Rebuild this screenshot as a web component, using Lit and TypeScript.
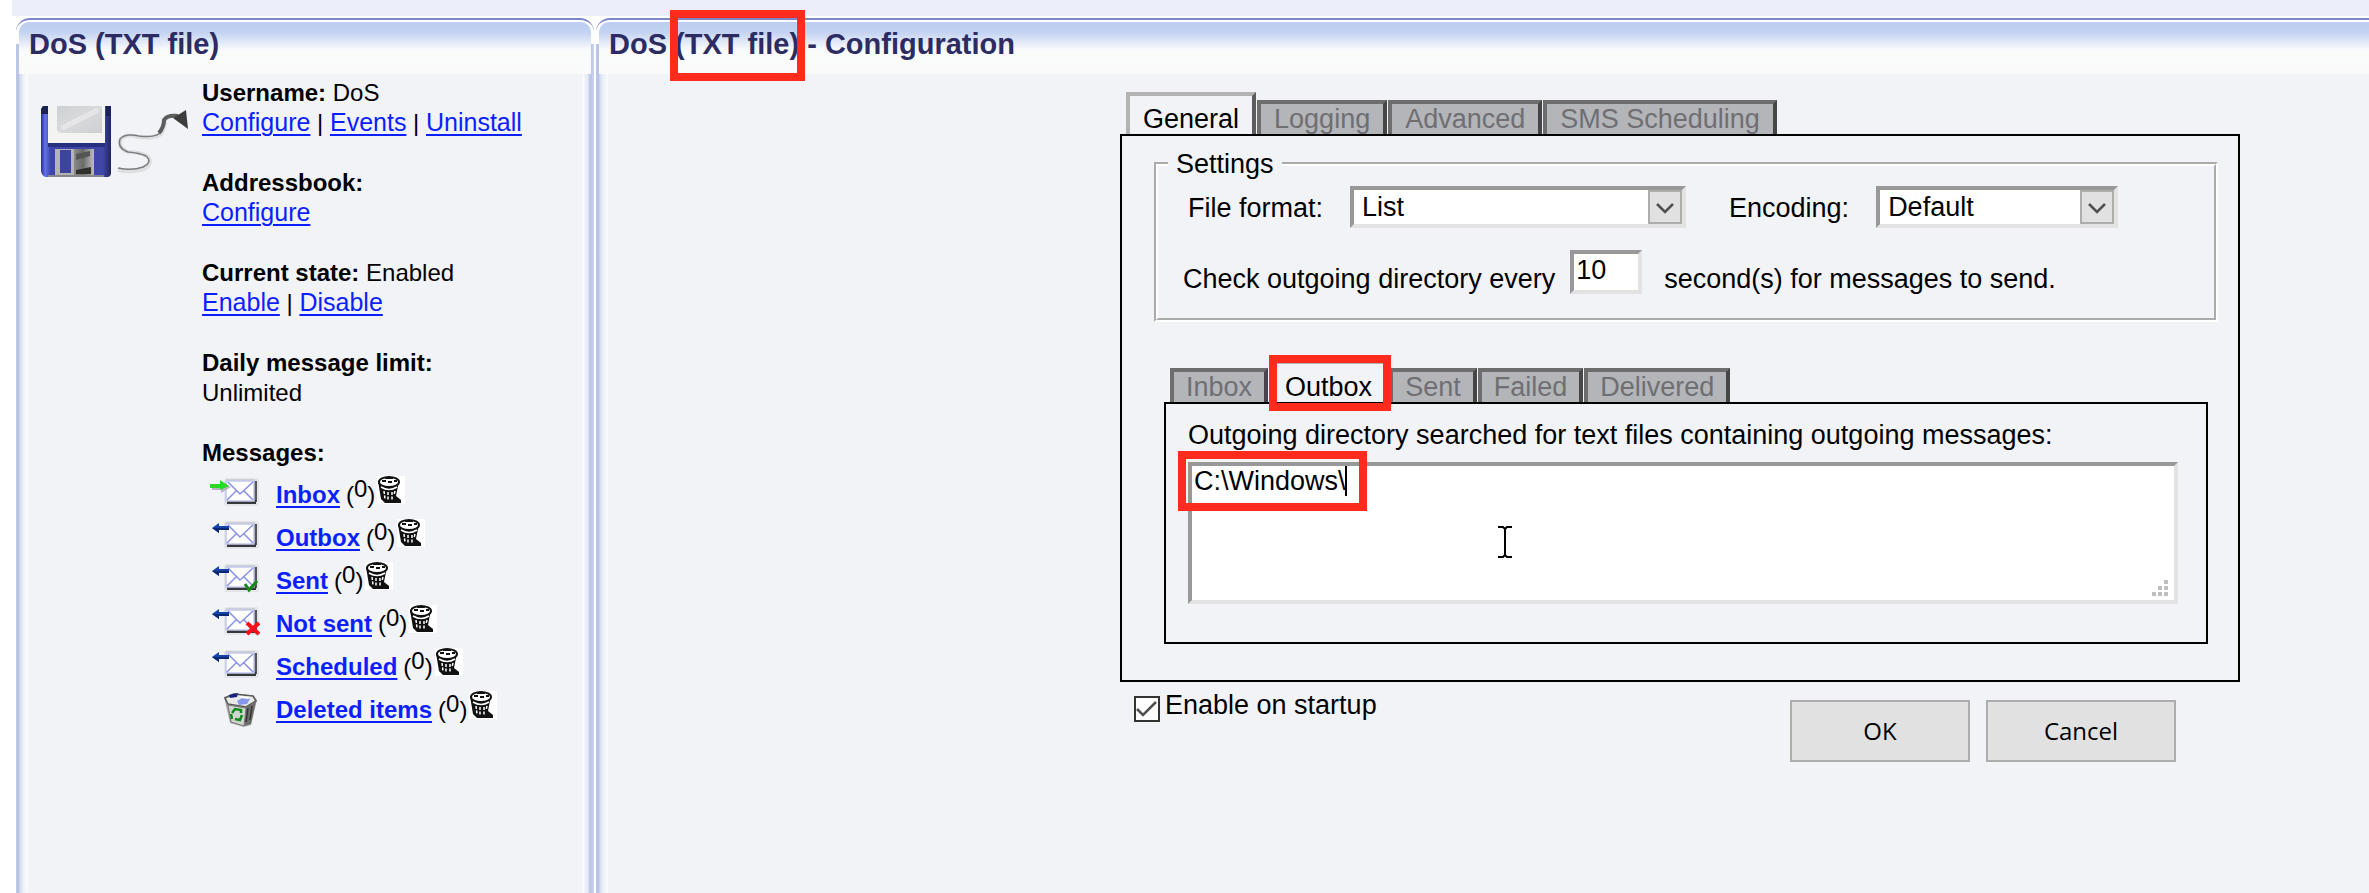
import { LitElement, html, css, svg, nothing } from "lit";
import { customElement, property, state } from "lit/decorators.js";
import { classMap } from "lit/directives/class-map.js";

type Mail = "in" | "out" | "sent" | "failed" | "bin";

@customElement("tab-bar")
class TabBar extends LitElement {
  @property({ type: Array }) tabs: string[] = [];
  @property() active = "";
  @property() marked = "";
  @property({ type: Boolean, reflect: true }) compact = false;

  static styles = css`
    :host {
      display: flex;
      align-items: flex-end;
      gap: 1px;
      padding-left: 6px;
    }
    .tab {
      position: relative;
      box-sizing: border-box;
      height: 34px;
      margin: 0;
      padding: 0 13px;
      border: 4px solid #6c6d6c;
      border-right-color: #454645;
      border-bottom: 0;
      background: #b3b5b9;
      color: #6f6f73;
      font: 27px/30px "Liberation Sans", Arial, sans-serif;
      white-space: nowrap;
    }
    :host([compact]) .tab {
      padding: 0 12px;
    }
    .tab.active,
    :host([compact]) .tab.active {
      height: 42px;
      padding-top: 8px;
      border-color: #b2b3b2;
      border-right-color: #5c5d5c;
      background: #f1f3f7;
      color: #000;
    }
    .mark {
      position: absolute;
      inset: -9px -7px -9px -4px;
      border: 8px solid #ff2c1e;
      pointer-events: none;
      z-index: 2;
    }
  `;

  private pick(tab: string) {
    this.dispatchEvent(new CustomEvent("pick", { detail: tab }));
  }

  render() {
    return this.tabs.map(
      (t) => html`<button
        type="button"
        class=${classMap({ tab: true, active: t === this.active })}
        @click=${() => this.pick(t)}
      >${t}${t === this.marked ? html`<span class="mark"></span>` : nothing}</button>`
    );
  }
}

const arrowIn = svg`<path d="M2 7H11V4L21 9L11 15V12H2Z" fill="#b9b0c6"/><path d="M0 6H10V2L19 8L10 12V10H0Z" fill="#27dc20"/>`;
const arrowOut = svg`<path d="M2 7L9 2V5H19V9H9V12Z" fill="#1643a8"/><path d="M2 7H19V9H9V12Z" fill="#0a2878"/>`;

function mailIcon(kind: Mail) {
  if (kind === "bin") {
    return html`<svg class="mail" viewBox="0 0 50 34" aria-hidden="true">
      <path d="M14 4L24 0L44 3L47 7L41 32L34 34L20 30Z" fill="#a9aaa8" />
      <path d="M15 5L24 1L43 3L46 8L36 14L18 11Z" fill="#e9e9e7" stroke="#5a5a5a" stroke-width="1.500" />
      <path d="M36 14L46 8L41 31L34 33Z" fill="#6d6e6c" />
      <path d="M18 12L36 15L34 33L21 29Z" fill="#d3d4d1" stroke="#777" />
      <path d="M19 2L28 0L27 4L20 5Z" fill="#1a1f83" />
      <path d="M27 8L34 4L40 6L37 11L29 12Z" fill="#8796ee" />
      <path d="M30 3L40 4L38 6L31 5Z" fill="#fff" />
      <path d="M22 20L25 16L31 17V20M32 22L30 27L25 26M22 26L21 21" fill="none" stroke="#118a1d" stroke-width="2.500" />
      <path d="M38 15L36 29M42 13L40 27" stroke="#333" stroke-width="1.500" />
    </svg>`;
  }
  return html`<svg class="mail" viewBox="0 0 50 34" aria-hidden="true">
    <rect x="14" y="0" width="35" height="28" rx="3" fill="#e4e5ea" />
    <rect x="16" y="1" width="29" height="3" fill="#cfd0d6" />
    <rect x="43" y="3" width="4" height="21" fill="#55575b" />
    <rect x="17" y="22" width="29" height="4" fill="#35373b" />
    <rect x="16" y="3" width="28" height="20" fill="#fff" stroke="#c3c7ea" stroke-width="1.500" />
    <path d="M18 4L30 16L43 4M17 22L26 13M43 22L34 13" fill="none" stroke="#8791e6" stroke-width="1.500" />
    ${kind === "in" ? arrowIn : arrowOut}
    ${kind === "sent" ? svg`<path d="M35 20L39 26L47 17" fill="none" stroke="#138a13" stroke-width="3"/>` : nothing}
    ${kind === "failed" ? svg`<path d="M37 16L49 27M49 16L37 27" fill="none" stroke="#f5101c" stroke-width="4"/>` : nothing}
  </svg>`;
}

const trash = html`<svg class="trash" viewBox="0 0 28 28" aria-hidden="true">
  <rect width="28" height="28" fill="#fff" />
  <path d="M1 5L4 23L8 27H24V24L19 20L22 5Z" fill="#111" />
  <ellipse cx="12" cy="6" rx="10" ry="5" fill="#fff" stroke="#111" stroke-width="2" />
  <path d="M5 5H9M11 6H15M17 5H20M8 2H16" stroke="#111" stroke-width="2" />
  <path d="M4 11Q12 16 20 11" fill="none" stroke="#fff" stroke-width="1.500" />
  <path d="M7 15L8 23M11 16V25M15 16V24M18 15L17 19" stroke="#fff" stroke-width="1.500" stroke-dasharray="3 1.500" />
</svg>`;

const floppy = html`<svg class="floppy" viewBox="0 0 150 80" aria-hidden="true">
  <defs>
    <linearGradient id="blue" x1="0" x2="1">
      <stop offset="0" stop-color="#2a2f8f" />
      <stop offset="0.060" stop-color="#6470ea" />
      <stop offset="0.140" stop-color="#3c43ab" />
      <stop offset="0.880" stop-color="#4047a8" />
      <stop offset="1" stop-color="#20265f" />
    </linearGradient>
    <linearGradient id="label" x1="0" y1="0" x2="1" y2="1">
      <stop offset="0" stop-color="#cfd0d2" />
      <stop offset="0.500" stop-color="#d9dadc" />
      <stop offset="1" stop-color="#cdced0" />
    </linearGradient>
    <linearGradient id="metal" x1="0" x2="1">
      <stop offset="0" stop-color="#8b8b88" />
      <stop offset="0.500" stop-color="#6a6b69" />
      <stop offset="1" stop-color="#b0b0ad" />
    </linearGradient>
  </defs>
  <path d="M3 6H71V73Q71 76 68 77H5Q1 75 1 70V10Z" fill="url(#blue)" />
  <path d="M1 9L3 6H8V14H1ZM66 6H71V16H66Z" fill="#1b2150" />
  <path d="M8 6H65V43H8Z" fill="#f3f3f2" />
  <path d="M17 6H62V33H22Q17 33 17 29Z" fill="url(#label)" />
  <path d="M22 28L58 10" stroke="#e6e6e8" stroke-width="5" />
  <path d="M8 43H65V47H8Z" fill="#27307f" />
  <path d="M15 49H54V76H15Z" fill="#b4b5b3" />
  <path d="M20 50H31V73H20Z" fill="#3d449f" />
  <path d="M34 49H52V76H34Z" fill="url(#metal)" />
  <path d="M36 70L51 67V74H36Z" fill="#2f302e" />
  <path d="M36 54L50 51V56L36 60Z" fill="#555654" />
  <path d="M8 76H64" stroke="#85868a" stroke-width="2" />
  <path d="M78 70Q92 73 104 69Q114 63 107 56Q100 52 88 52Q77 48 81 39Q86 33 99 37Q114 39 121 34Q125 28 125 20Q128 14 138 16" fill="none" stroke="#dedfe1" stroke-width="4" />
  <path d="M78 68Q92 71 103 67Q113 62 106 56Q100 53 88 52Q77 48 80 39Q85 33 99 36Q114 38 120 33Q124 28 124 20Q127 14 138 15" fill="none" stroke="#7b7c7d" stroke-width="1.500" />
  <path d="M119 33Q124 27 124 20Q127 15 138 16" fill="none" stroke="#5c5d5d" stroke-width="4" />
  <path d="M146 10L148 29L133 18Z" fill="#3c3d3c" />
</svg>`;

@customElement("app-root")
class AppRoot extends LitElement {
  @state() private mainTab = "General";
  @state() private boxTab = "Outbox";

  static styles = css`
    :host {
      display: block;
      background: #fff;
      color: #000;
      font: 24px/30px "Liberation Sans", Arial, sans-serif;
    }
    * {
      box-sizing: border-box;
    }
    .page {
      display: flex;
      flex-direction: column;
      min-height: 100vh;
      overflow: hidden;
    }
    .strip {
      height: 16px;
      margin-left: 12px;
      background: #eceefa;
    }
    .columns {
      display: grid;
      grid-template-columns: 578px 1fr;
      gap: 2px;
      flex: 1;
      padding: 2px 0 0 16px;
    }
    .panel {
      display: flex;
      flex-direction: column;
      border-top: 2px solid #7d88c8;
      border-radius: 14px 14px 0 0;
      padding: 2px 12px 0;
      background:
        linear-gradient(90deg, #bcc7e6, #b9c5e3 3px, #dae1f1 4px, #dfe5f3 6px, #eef1f9 7px, #f0f3f9 9px, #f8f9fb 10px) 0 24px / 12px 100% no-repeat,
        linear-gradient(270deg, #cdd6ec, #b9c5e3 3px, #c5cfe8 5px, #e6ebf6 6px, #eef1f9 9px, #f8f9fb 10px) 100% 24px / 12px 100% no-repeat,
        #fff;
    }
    .wide {
      border-top-right-radius: 0;
      padding-right: 0;
      background:
        linear-gradient(90deg, #bcc7e6, #b9c5e3 3px, #dae1f1 4px, #dfe5f3 6px, #eef1f9 7px, #f0f3f9 9px, #f8f9fb 10px) 0 24px / 12px 100% no-repeat,
        #fff;
    }
    .head {
      height: 52px;
      margin: 0 -9px;
      padding: 0 10px;
      border-radius: 10px 10px 0 0;
      background: linear-gradient(#bccdf1, #c3d2f2 10px, #dfe7f7 19px, #f7f9fb 27px, #fafbfb 30px, #fafafa);
      color: #2d2c62;
      font-size: 29px;
      font-weight: bold;
      line-height: 44px;
      white-space: nowrap;
    }
    .wide .head {
      margin-right: 0;
      border-top-right-radius: 0;
    }
    .body {
      flex: 1;
      background: #f1f3f7;
    }
    .marked {
      position: relative;
    }
    .mark {
      position: absolute;
      border: 8px solid #ff2c1e;
      pointer-events: none;
      z-index: 2;
    }
    .title-mark {
      inset: -18px -6px -21px -5px;
    }
    .path-mark {
      top: -11px;
      left: -10px;
      width: 189px;
      height: 60px;
    }
    a {
      color: #0b1fff;
      text-underline-offset: 3px;
      text-decoration-thickness: 2px;
    }
    .account {
      display: flex;
      gap: 12px;
      padding: 4px 0 0 12px;
    }
    .floppy {
      flex: none;
      width: 150px;
      height: 80px;
      margin-top: 22px;
    }
    .info p {
      margin: 0 0 30px;
    }
    .info p a {
      font-size: 25px;
      line-height: 24px;
    }
    .info h2 {
      margin: 0;
      font-size: 24px;
      line-height: 30px;
    }
    .folders {
      margin: 5px 0 0;
      padding: 0 0 0 8px;
      list-style: none;
    }
    .folders li {
      display: flex;
      height: 43px;
      line-height: 43px;
    }
    .folders a {
      margin: 0 6px 0 16px;
      font-weight: bold;
    }
    .mail {
      width: 50px;
      height: 34px;
      margin-top: 5px;
    }
    .trash {
      width: 28px;
      height: 28px;
      margin: 3px 0 0 2px;
    }
    .raised {
      position: relative;
      top: -6px;
    }
    .form {
      max-width: 1120px;
      margin: 18px 16px 0 512px;
      font-size: 27px;
    }
    .sheet {
      padding: 13px 20px 36px 32px;
      border: 2px solid #000;
    }
    fieldset {
      margin: 0;
      padding: 7px 0 24px;
      border: 4px groove #fff;
    }
    legend {
      margin-left: 10px;
      padding: 0 8px;
      line-height: 30px;
    }
    .row {
      display: flex;
      align-items: center;
      gap: 27px;
      padding-left: 30px;
      white-space: nowrap;
    }
    .row label {
      padding-top: 2px;
    }
    .timing {
      align-items: flex-end;
      gap: 15px;
      margin-top: 22px;
      padding-left: 25px;
    }
    .after {
      padding-left: 7px;
    }
    .pick {
      position: relative;
      width: 336px;
    }
    .short {
      width: 242px;
    }
    .second {
      margin-left: 16px;
    }
    select,
    .secs,
    textarea {
      display: block;
      margin: 0;
      border: 4px solid #979897;
      border-right-color: #e3e3e3;
      border-bottom-color: #e3e3e3;
      border-radius: 0;
      outline: none;
      background: #fff;
      color: #000;
      font: 27px/30px "Liberation Sans", Arial, sans-serif;
    }
    select {
      appearance: none;
      width: 100%;
      height: 42px;
      padding: 0 40px 0 8px;
    }
    .drop {
      position: absolute;
      top: 4px;
      right: 4px;
      width: 34px;
      height: 34px;
      border: 2px solid #adadad;
      background: #e1e1e1;
      pointer-events: none;
    }
    .secs {
      width: 72px;
      height: 44px;
      padding: 0 0 4px 2px;
    }
    .boxes {
      margin: 38px 10px 0;
    }
    .inner {
      padding: 16px 28px 38px 22px;
      border: 2px solid #000;
    }
    .inner label {
      display: block;
      margin-bottom: 12px;
    }
    textarea {
      width: 100%;
      height: 142px;
      padding: 0 2px;
      resize: none;
    }
    .caret {
      position: absolute;
      top: 4px;
      left: 157px;
      width: 2px;
      height: 30px;
      background: #000;
    }
    .beam {
      position: absolute;
      top: 64px;
      left: 310px;
      width: 14px;
      height: 32px;
    }
    .grip {
      position: absolute;
      right: 10px;
      bottom: 8px;
      width: 16px;
      height: 16px;
    }
    .foot {
      display: flex;
      justify-content: space-between;
      align-items: flex-start;
      padding: 8px 64px 0 14px;
    }
    .startup {
      display: flex;
      gap: 5px;
    }
    .tick {
      position: relative;
      width: 26px;
      height: 26px;
      margin-top: 6px;
    }
    .tick input {
      appearance: none;
      display: block;
      width: 26px;
      height: 26px;
      margin: 0;
      border: 2px solid #333;
      background: #fff;
    }
    .tick svg {
      position: absolute;
      inset: 0;
      pointer-events: none;
    }
    .tick input:not(:checked) + svg {
      display: none;
    }
    .actions {
      display: flex;
      gap: 16px;
      padding-top: 10px;
    }
    .actions button {
      width: 180px;
      height: 62px;
      padding: 0;
      border: 2px solid #adadad;
      background: #e1e1e1;
      color: #000;
      font: 24px/30px "Open Sans", "Noto Sans", sans-serif;
    }
    .actions .cancel {
      width: 190px;
    }
  `;

  private folders: [Mail, string][] = [
    ["in", "Inbox"],
    ["out", "Outbox"],
    ["sent", "Sent"],
    ["failed", "Not sent"],
    ["out", "Scheduled"],
    ["bin", "Deleted items"],
  ];

  private drop() {
    return html`<svg class="drop" viewBox="0 0 30 30" aria-hidden="true">
      <path d="M7 12L15 20L23 12" fill="none" stroke="#505050" stroke-width="2.500" />
    </svg>`;
  }

  render() {
    return html`<div class="page">
      <div class="strip"></div>
      <div class="columns">
        <aside class="panel">
          <div class="head">DoS (TXT file)</div>
          <div class="body account">
            ${floppy}
            <div class="info">
              <p><b>Username:</b> DoS<br /><a href="#">Configure</a> | <a href="#">Events</a> | <a href="#">Uninstall</a></p>
              <p><b>Addressbook:</b><br /><a href="#">Configure</a></p>
              <p><b>Current state:</b> Enabled<br /><a href="#">Enable</a> | <a href="#">Disable</a></p>
              <p><b>Daily message limit:</b><br />Unlimited</p>
              <h2>Messages:</h2>
              <ul class="folders">
                ${this.folders.map(
                  ([kind, name]) => html`<li>${mailIcon(kind)}<a href="#">${name}</a><span>(<span class="raised">0</span>)</span>${trash}</li>`
                )}
              </ul>
            </div>
          </div>
        </aside>
        <main class="panel wide">
          <div class="head">DoS <span class="marked">(TXT file)<span class="mark title-mark"></span></span> - Configuration</div>
          <div class="body">
            <form class="form" @submit=${(e: Event) => e.preventDefault()}>
              <tab-bar
                .tabs=${["General", "Logging", "Advanced", "SMS Scheduling"]}
                .active=${this.mainTab}
                @pick=${(e: CustomEvent) => (this.mainTab = e.detail)}
              ></tab-bar>
              <div class="sheet">
                <fieldset>
                  <legend>Settings</legend>
                  <div class="row">
                    <label for="format">File format:</label>
                    <div class="pick">
                      <select id="format"><option>List</option></select>${this.drop()}
                    </div>
                    <label class="second" for="encoding">Encoding:</label>
                    <div class="pick short">
                      <select id="encoding"><option>Default</option></select>${this.drop()}
                    </div>
                  </div>
                  <div class="row timing">
                    <label for="secs">Check outgoing directory every</label>
                    <input class="secs" id="secs" type="text" value="10" />
                    <span class="after">second(s) for messages to send.</span>
                  </div>
                </fieldset>
                <div class="boxes">
                  <tab-bar
                    compact
                    .tabs=${["Inbox", "Outbox", "Sent", "Failed", "Delivered"]}
                    .active=${this.boxTab}
                    marked="Outbox"
                    @pick=${(e: CustomEvent) => (this.boxTab = e.detail)}
                  ></tab-bar>
                  <div class="inner">
                    <label for="path">Outgoing directory searched for text files containing outgoing messages:</label>
                    <div class="marked">
                      <textarea id="path" spellcheck="false" .value=${"C:\\Windows\\"}></textarea>
                      <span class="caret"></span>
                      <span class="mark path-mark"></span>
                      <svg class="beam" viewBox="0 0 14 32" aria-hidden="true">
                        <path d="M0 1H5L7 3L9 1H14M0 31H5L7 29L9 31H14M7 2V30" fill="none" stroke="#000" stroke-width="2" />
                      </svg>
                      <svg class="grip" viewBox="0 0 16 16" aria-hidden="true">
                        <path d="M12 0h4v4h-4zM6 6h4v4h-4zM12 6h4v4h-4zM0 12h4v4h-4zM6 12h4v4h-4zM12 12h4v4h-4z" fill="#bfbfbf" />
                      </svg>
                    </div>
                  </div>
                </div>
              </div>
              <div class="foot">
                <label class="startup">
                  <span class="tick">
                    <input type="checkbox" checked />
                    <svg viewBox="0 0 26 26" aria-hidden="true">
                      <path d="M3 13L9 19L22 6" fill="none" stroke="#505050" stroke-width="2.500" />
                    </svg>
                  </span>
                  Enable on startup
                </label>
                <div class="actions">
                  <button type="submit">OK</button>
                  <button type="button" class="cancel">Cancel</button>
                </div>
              </div>
            </form>
          </div>
        </main>
      </div>
    </div>`;
  }
}
